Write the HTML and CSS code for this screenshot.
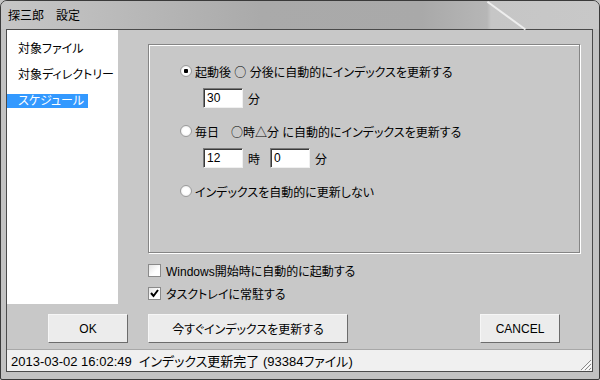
FILE: index.html
```html
<!DOCTYPE html>
<html>
<head>
    <title>探三郎　設定</title>
    <link rel="stylesheet" href="styles.css">
</head>
<body>
    <div class="window">
        <div class="titlebar">
            <span class="title">探三郎　設定</span>
        </div>
        <div class="client">
            <div class="top">
                <ul class="nav">
                    <li><span class="item">対象ファイル</span></li>
                    <li><span class="item">対象ディレクトリー</span></li>
                    <li><span class="item selected">スケジュール</span></li>
                </ul>
                <div class="panel">
                    <div class="group">
                        <div class="radio-row">
                            <span class="radio checked"></span>
                            <span>起動後 <span class="sym">○</span> 分後に自動的にインデックスを更新する</span>
                        </div>
                        <div class="field-row">
                            <input type="text" class="field" value="30">
                            <span class="unit">分</span>
                        </div>
                        <div class="radio-row gap">
                            <span class="radio"></span>
                            <span>毎日　<span class="sym">○</span>時<span class="sym">△</span>分 に自動的にインデックスを更新する</span>
                        </div>
                        <div class="field-row">
                            <input type="text" class="field" value="12">
                            <span class="unit">時</span>
                            <input type="text" class="field" value="0">
                            <span class="unit">分</span>
                        </div>
                        <div class="radio-row gap">
                            <span class="radio"></span>
                            <span>インデックスを自動的に更新しない</span>
                        </div>
                    </div>
                    <div class="check-row first">
                        <span class="checkbox"></span>
                        <span>Windows開始時に自動的に起動する</span>
                    </div>
                    <div class="check-row">
                        <span class="checkbox">
                            <svg width="11" height="11" viewBox="0 0 11 11"><polyline points="2,5 4.5,8 9,2" fill="none" stroke="#000" stroke-width="2"/></svg>
                        </span>
                        <span>タスクトレイに常駐する</span>
                    </div>
                </div>
            </div>
            <div class="buttons">
                <button class="btn small">OK</button>
                <button class="btn wide">今すぐインデックスを更新する</button>
                <button class="btn small cancel">CANCEL</button>
            </div>
            <div class="status">
                <span>2013-03-02 16:02:49&nbsp;&nbsp;インデックス更新完了 (93384ファイル)</span>
                <svg class="grip" width="13" height="13" viewBox="0 0 13 13">
                    <path d="M12 2 L2 12 M12 6 L6 12 M12 10 L10 12" stroke="#8a8a8a" stroke-width="1"/>
                    <path d="M13 3 L3 13 M13 7 L7 13 M13 11 L11 13" stroke="#fff" stroke-width="1"/>
                </svg>
            </div>
        </div>
    </div>
</body>
</html>
```

FILE: styles.css
```css
* {
    box-sizing: border-box;
}
body {
    margin: 0;
    font-family: "Liberation Sans", "Noto Sans CJK JP", sans-serif;
    font-size: 12px;
    font-feature-settings: "palt";
    color: #000;
    background-color: #c4c4c4;
}
.window {
    width: 600px;
    height: 380px;
    display: flex;
    flex-direction: column;
    border: 1px solid #3a3a3a;
    border-radius: 7px 7px 2px 2px;
    background-color: #c2c2c2;
    overflow: hidden;
}
.titlebar {
    position: relative;
    height: 28px;
    flex-shrink: 0;
    display: flex;
    align-items: center;
    padding-left: 7px;
    background: linear-gradient(to right, #c6c6c6 0, #bdbdbd 90px, #aaaaaa 260px, #a9a9a9 420px, #b6b6b6 486px, #c6c6c6 490px, #c8c8c8 100%);
}
.titlebar::after {
    content: "";
    position: absolute;
    left: 487px;
    top: 0;
    width: 47px;
    height: 1.5px;
    background-color: #eeeeee;
    transform-origin: 0 0;
    transform: rotate(36deg);
}
.title {
    font-size: 12px;
    padding-bottom: 1px;
}
.sym {
    font-family: "Noto Sans CJK JP", sans-serif;
    font-feature-settings: normal;
}
.client {
    flex: 1;
    display: flex;
    flex-direction: column;
    margin: 0 6px 7px 5px;
    border: 1px solid #4a4a4a;
    background-color: #c8c8c8;
}
.top {
    display: flex;
    height: 274px;
}
.nav {
    width: 111px;
    margin: 0;
    padding: 5px 0 0 0;
    list-style: none;
    background-color: #fff;
}
.nav li {
    height: 26px;
    line-height: 26px;
}
.item {
    display: inline-block;
    line-height: 14px;
    padding: 0 4px 0 11px;
    vertical-align: middle;
}
.item.selected {
    background-color: #3399ff;
    color: #fff;
}
.panel {
    flex: 1;
    padding: 14px 0 0 30px;
}
.group {
    width: 432px;
    height: 209px;
    padding: 18px 0 0 31px;
    border: 1px solid #858585;
    box-shadow: inset 1px 1px 0 #fff, 1px 1px 0 #fff;
}
.radio-row {
    display: flex;
    align-items: center;
    height: 16px;
    gap: 3px;
}
.radio-row.gap {
    margin-top: 15px;
}
.radio {
    width: 12px;
    height: 12px;
    border-radius: 50%;
    border: 1px solid #9c9c9c;
    background: radial-gradient(circle, #fff 0, #fff 45%, #dcdcdc 100%);
}
.radio.checked {
    background: radial-gradient(circle, #000 0, #000 2px, #fff 2.5px, #fff 45%, #dcdcdc 100%);
}
.field-row {
    display: flex;
    align-items: center;
    height: 20px;
    margin: 9px 0 0 23px;
}
.field {
    width: 40px;
    height: 20px;
    padding: 0 0 0 3px;
    font-family: "Liberation Sans", "Noto Sans CJK JP", sans-serif;
    font-size: 12px;
    border: 1px solid;
    border-color: #7a7a7a #f0f0f0 #f0f0f0 #7a7a7a;
    box-shadow: inset 1px 1px 0 #3a3a3a;
    background-color: #fff;
    outline: none;
}
.unit {
    margin: 0 10px 0 5px;
}
.check-row {
    display: flex;
    align-items: center;
    height: 16px;
    gap: 5px;
    margin-top: 7px;
}
.check-row.first {
    margin-top: 9px;
}
.checkbox {
    width: 13px;
    height: 13px;
    display: flex;
    align-items: center;
    justify-content: center;
    border: 1px solid #8a8a8a;
    background: linear-gradient(135deg, #e4e4e4, #fff 60%);
}
.buttons {
    display: flex;
    gap: 20px;
    margin-top: 10px;
    padding: 0 32px 0 41px;
}
.btn {
    height: 29px;
    font-family: "Liberation Sans", "Noto Sans CJK JP", sans-serif;
    font-size: 12px;
    font-feature-settings: "palt";
    color: #000;
    background-color: #ececec;
    border: 1px solid;
    border-color: #f6f6f6 #6c6c6c #6c6c6c #f6f6f6;
    padding: 0;
}
.btn.small {
    width: 80px;
}
.btn.wide {
    width: 200px;
}
.btn.cancel {
    margin-left: auto;
}
.status {
    margin-top: auto;
    height: 22px;
    display: flex;
    align-items: center;
    justify-content: space-between;
    padding-left: 4px;
    font-size: 13px;
    border-top: 1px solid #a8a8a8;
    background-color: #f0f0f0;
}
.grip {
    align-self: flex-end;
}
```
